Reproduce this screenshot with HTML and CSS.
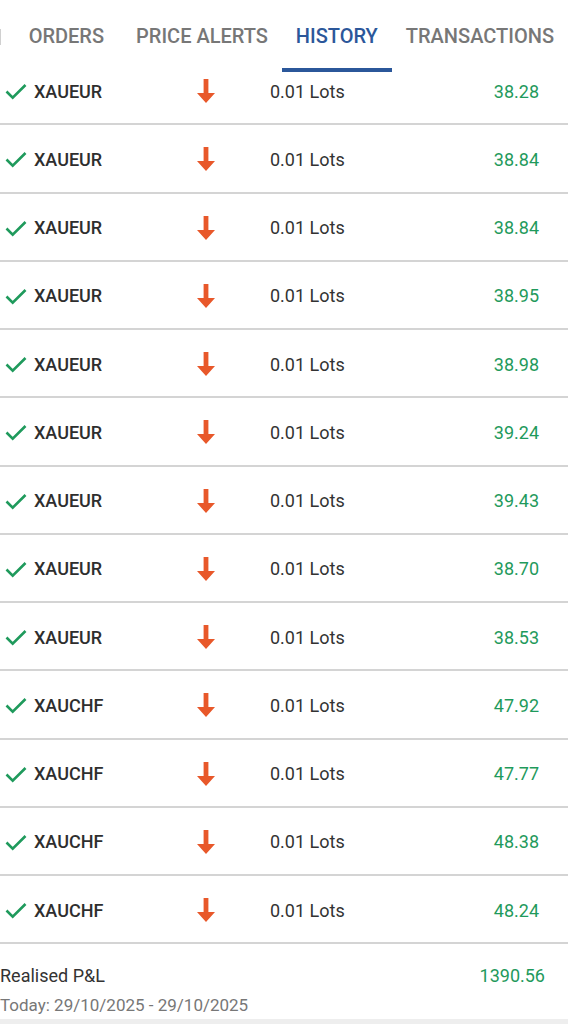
FILE: index.html
```html
<!DOCTYPE html>
<html lang="en">
<head>
    <meta charset="UTF-8">
    <meta name="viewport" content="width=device-width, initial-scale=1.0">
    <title>History</title>
    <link rel="stylesheet" href="styles.css">
</head>
<body>
    <div class="screen">
        <nav class="tabs">
            <div class="tab-strip">
                <span class="tab-edge"></span>
                <span class="tab tab-orders">ORDERS</span>
                <span class="tab">PRICE ALERTS</span>
                <span class="tab active">HISTORY</span>
                <span class="tab">TRANSACTIONS</span>
            </div>
        </nav>

        <div class="list">
            <ul id="trade-list"></ul>
        </div>

        <div class="summary">
            <div class="summary-row">
                <span class="summary-label">Realised P&amp;L</span>
                <span class="summary-value">1390.56</span>
            </div>
            <div class="summary-range">Today: 29/10/2025 - 29/10/2025</div>
        </div>
        <div class="bottom-bar"></div>
    </div>

    <script>
        const trades = [
            ['XAUEUR', '38.28'], ['XAUEUR', '38.84'], ['XAUEUR', '38.84'],
            ['XAUEUR', '38.95'], ['XAUEUR', '38.98'], ['XAUEUR', '39.24'],
            ['XAUEUR', '39.43'], ['XAUEUR', '38.70'], ['XAUEUR', '38.53'],
            ['XAUCHF', '47.92'], ['XAUCHF', '47.77'], ['XAUCHF', '48.38'],
            ['XAUCHF', '48.24']
        ];

        const checkIcon = '<svg class="check" viewBox="0 0 24 24" width="24" height="24"><path d="M2.5 12.5l6.2 6.2L21.5 6" fill="none" stroke="currentColor" stroke-width="2.6"/></svg>';
        const arrowIcon = '<svg class="arrow" viewBox="0 0 20 26" width="20" height="26"><path d="M7.6 1h4.8v14H19L10 25 1 15h6.6z" fill="currentColor"/></svg>';

        const list = document.getElementById('trade-list');
        trades.forEach(([symbol, profit]) => {
            const li = document.createElement('li');
            li.className = 'trade';
            li.innerHTML =
                '<span class="symbol">' + checkIcon + '<b>' + symbol + '</b></span>' +
                '<span class="side">' + arrowIcon + '</span>' +
                '<span class="volume">0.01 Lots</span>' +
                '<span class="profit">' + profit + '</span>';
            list.appendChild(li);
        });
    </script>
</body>
</html>
```

FILE: styles.css
```css
body {
    margin: 0;
    font-family: Roboto, "Noto Sans", sans-serif;
    background-color: #ffffff;
    color: #333333;
}

.screen {
    width: 568px;
    height: 1024px;
    display: flex;
    flex-direction: column;
    overflow: hidden;
}

.tabs {
    height: 72px;
    flex-shrink: 0;
    overflow: hidden;
    background-color: #ffffff;
    position: relative;
    z-index: 1;
}

.tab-strip {
    display: flex;
    align-items: center;
    height: 100%;
}

.tab-edge {
    width: 2px;
    height: 16px;
    margin-top: 1px;
    background-color: #d0d0d0;
}

.tab {
    padding: 4px 14px 0 14px;
    height: 100%;
    display: flex;
    align-items: center;
    box-sizing: border-box;
    font-size: 20px;
    font-weight: 500;
    color: #777777;
    white-space: nowrap;
    border-bottom: 4px solid transparent;
}

.tab-orders {
    padding-left: 28px;
    padding-right: 18px;
}

.tab.active {
    color: #2b579a;
    border-bottom-color: #2b579a;
}

.list {
    height: 872px;
    flex-shrink: 0;
    overflow: hidden;
}

ul {
    list-style-type: none;
    padding: 0;
    margin: -15px 0 0 0;
}

.trade {
    height: 68.25px;
    box-sizing: border-box;
    display: flex;
    align-items: center;
    border-bottom: 2px solid #d4d4d4;
    padding-top: 2px;
}

.symbol {
    width: 186px;
    display: flex;
    align-items: center;
    gap: 6px;
    padding-left: 4px;
    font-size: 18px;
}

.symbol b {
    font-weight: 500;
    color: #2e2e2e;
}

.check {
    color: #1f9a5c;
}

.side {
    width: 80px;
    display: flex;
    padding-left: 6px;
    box-sizing: border-box;
    color: #e8582a;
}

.volume {
    flex: 1;
    font-size: 18px;
    color: #333333;
}

.profit {
    padding-right: 29px;
    font-size: 18px;
    color: #1f9a5c;
}

.summary {
    flex: 1;
    padding-top: 21px;
}

.summary-row {
    display: flex;
    justify-content: space-between;
    align-items: center;
    font-size: 18px;
}

.summary-label {
    color: #333333;
}

.summary-value {
    color: #1f9a5c;
    padding-right: 23px;
}

.summary-range {
    margin-top: 9px;
    font-size: 17px;
    color: #777777;
}

.bottom-bar {
    height: 5px;
    background-color: #eeeeee;
    flex-shrink: 0;
}
```
